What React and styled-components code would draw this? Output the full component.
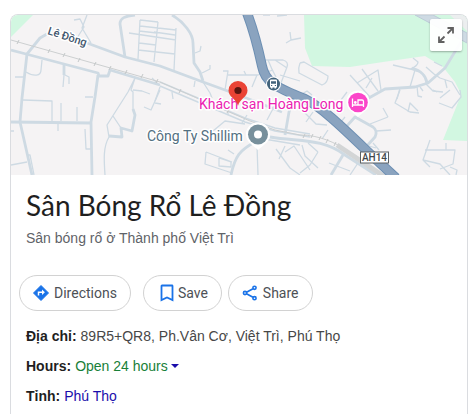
import React, {useState} from 'react'
import styled, {createGlobalStyle} from 'styled-components'

const GlobalStyle = createGlobalStyle`
  * {
    box-sizing: border-box;
  }
  body {
    margin: 0;
    background: white;
    font-family: 'Liberation Sans', Arial, sans-serif;
    font-size: 14px;
    color: #1f1f1f;
  }
`

const Card = styled.main`
  display: flex;
  flex-direction: column;
  min-height: calc(100vh - 14px);
  margin: 14px 8px 0 10px;
  border: 1px solid #dadce0;
  border-bottom: none;
  border-radius: 8px 8px 0 0;
  overflow: hidden;
`

const MapArea = styled.div`
  position: relative;
  display: flex;
  height: 160px;
  background: #f5f3f4;
`

const MapDrawing = styled.svg`
  width: 100%;
  height: 100%;
`

const ExpandButton = styled.button`
  position: absolute;
  top: 4px;
  right: 5px;
  display: flex;
  align-items: center;
  justify-content: center;
  width: 32px;
  height: 32px;
  padding: 0;
  border: none;
  border-radius: 2px;
  background: rgba(255, 255, 255, 0.94);
  box-shadow: 0 1px 2px rgba(0, 0, 0, 0.3);
  cursor: pointer;
`

const Heading = styled.header`
  display: flex;
  flex-direction: column;
  gap: 6px;
  padding: 12px 15px 0;
`

const Title = styled.h1`
  margin: 0;
  font-family: Lato, Roboto, sans-serif;
  font-size: 28px;
  font-weight: 400;
  line-height: 36px;
`

const Subtitle = styled.div`
  line-height: 18px;
  color: #5f6368;
`

const Actions = styled.div`
  display: flex;
  gap: 12px;
  padding: 28px 8px 0;
`

const ActionGroup = styled.div`
  display: flex;
  gap: 6px;
`

const ActionButton = styled.button`
  display: flex;
  align-items: center;
  gap: 3px;
  height: 36px;
  padding: 0 13px 0 11px;
  border: 1px solid #d2d2d2;
  border-radius: 18px;
  background: white;
  color: #4d5156;
  font-family: Roboto, sans-serif;
  font-size: 14px;
  cursor: pointer;
`

const ActionIcon = styled.svg`
  width: 20px;
  height: 20px;
  color: #1a73e8;
`

const Facts = styled.div`
  display: flex;
  flex-direction: column;
  padding: 10px 15px;
`

const Fact = styled.div`
  display: flex;
  align-items: center;
  gap: 4px;
  line-height: 30px;
  color: #474747;
`

const FactName = styled.span`
  font-weight: bold;
  color: #1f1f1f;
`

const HoursButton = styled.button`
  display: flex;
  align-items: center;
  gap: 3px;
  padding: 0;
  border: none;
  background: none;
  color: #188038;
  font: inherit;
  cursor: pointer;
`

const Caret = styled.span`
  border: 4px solid transparent;
  border-top-color: #1a0dab;
  border-bottom: none;
`

const FactLink = styled.a`
  color: #1a0dab;
  text-decoration: none;
`

const MapLabel = styled.text`
  font-family: Roboto, sans-serif;
  font-size: ${props => props.$small ? '11px' : '14px'};
  font-weight: ${props => props.$small ? 500 : 400};
  fill: ${props => props.$color};
  stroke: white;
  stroke-width: 3px;
  stroke-linejoin: round;
  paint-order: stroke;
`

const MAIN_ROADS = [
  'M11 50 26 54 98 73 99 76 108 76 110 70 160 85',
  'M27 54 40 38 47 34',
  'M87 43 125 57 160 66 203 82 236 94 282 112',
  'M27 54 22 98 20 122 32 175',
  'M98 75 95 97 91 122 92 175',
  'M11 122 91 123',
  'M135 15C125 16 120 18 120 24L125 57',
  'M172 15C184 22 193 34 193 43L194 63 200 72 203 81',
  'M64 65 64 75',
  'M133 109 135 115 132 131 121 128 122 137 109 136',
  'M255 142C240 150 235 156 231 175',
  'M296 90 289 112 285 135',
  'M367 99 385 89 415 87 428 83 445 68 456 50 461 42',
  'M412 68C422 71 426 76 427 83',
  'M270 137C300 142 322 138 345 155L376 175',
  'M343 155 331 175',
  'M346 127 355 117 373 127C377 130 377 133 375 137L366 147',
]

const SMALL_ROADS = [
  'M26 72C34 77 41 76 41 70L42 60M15 77 23 77M64 75 63 87M65 75 69 77 69 84',
  'M87 15 82 28 91 43M74 20 80 19 84 27 77 38',
  'M140 20 138 59M158 22 154 62M176 28 174 70M140 20 158 22M140 26 176 30M139 31 157 33M129 33 176 40M139 43 156 45M138 50 175 54M154 32 175 35',
  'M85 97 93 97M23 100 52 101 52 121M61 103 61 121M77 107 77 121M58 123 58 131M85 129 86 149 91 149',
  'M11 131 14 131M11 165 27 162M28 155 30 155 34 175',
  'M135 78 128 92 107 125 109 137C103 147 104 160 105 175M135 78 131 90 133 92 133 110M133 90 142 91 150 94M113 116 121 128M144 107 151 110 160 90M155 103 161 104M152 78 158 84',
  'M195 53 200 51 201 46M202 73 210 69 210 65M194 87 195 81M203 82 210 93 212 98M225 90 228 71 223 71M228 75 258 75 273 70M244 71 246 75M257 75 252 87',
  'M172 92 173 99M160 87 155 101M263 15 270 15M277 16 287 15',
  'M290 32 291 40 286 43M291 40 301 38',
  'M264 60 283 60Q289 62 287 67L281 83M268 60Q272 70 276 77M275 60 287 68M280 75 300 81',
  'M300 63Q298 68 299 73L322 85Q328 83 328 76L304 62 300 63M302 94 307 91 312 95',
  'M228 105 228 115M247 115 242 123M275 105 267 120M245 124 225 121 213 131M207 98 212 97',
  'M206 152 232 162M206 152 205 164 232 173M219 158 219 166 231 167 231 162 219 158M228 150 234 154M257 145 258 175',
  'M276 149 290 168 300 175M279 159 285 146M285 152 294 146 310 170M302 145 305 156 318 168M318 152 310 165 300 173M308 143 318 152M252 137 300 145',
  'M313 112 306 122M303 111 316 124 327 125M328 130 322 139M300 108 305 111',
  'M350 75 370 97M362 69 378 91M357 83 378 70 381 90M366 88 372 78M341 100 347 92M345 117 336 128',
  'M393 65 410 69 422 73M413 58 418 62Q418 66 410 69M410 69 415 70 410 87M400 90 395 103 410 112 419 113M408 112 410 103 418 111',
  'M426 67 434 74 440 78 452 82 460 95M434 62 442 66M417 86 418 96 422 97M425 83 433 91 443 92M445 80 447 88M420 87 423 91M400 88 397 99',
  'M439 103 452 108 461 97 460 90M440 98 450 90M433 90 437 92',
  'M370 124 388 117M376 131 391 130M373 143 379 150M369 146 376 148M383 108 388 117',
  'M430 140 423 160 440 164 450 175M425 150 455 150 453 164 440 169M446 143 446 150M450 167 457 170 456 175M423 160 430 167',
  'M329 163 350 171M358 163 350 175',
]

const HIGHWAY = 'M247 13C255 34 259 52 262 66C265 82 275 87 305 99C320 106 340 125 367 151L396 178'

// positions of the sleepers along the railway: x, y
const RAIL_TICKS = [
  [18, 42], [49, 51], [64, 55], [79, 60], [95, 64], [110, 68], [126, 72], [142, 76], [157, 81],
  [180, 91], [204, 101], [228, 111], [304, 136], [312, 136], [320, 138], [327, 141], [335, 144],
]

function MapPicture() {
  return (
    <MapDrawing viewBox='11 15 456 160' preserveAspectRatio='xMinYMin slice' fill='none'>
      <path d='M11 15H33L11 37Z' fill='#d2f7e1' />
      <path d='M304 15 305 48 312 66 350 67 383 62 425 56 443 67 455 82 467 106V15Z' fill='#d2f7e1' />
      <path d='M463 90 443 140 467 141V90Z' fill='#d2f7e1' />
      <path d='M450 15H467V31Z' fill='#eceeef' />
      <path d='M415 15H433L467 33V43Z' fill='#cedae3' stroke='#bccbd7' />
      <g stroke='#cedae3' strokeLinejoin='round'>
        {SMALL_ROADS.map((d, index) => <path key={index} d={d} strokeWidth='1.3' />)}
        {MAIN_ROADS.map((d, index) => <path key={index} d={d} strokeWidth='2.8' />)}
      </g>
      <path d='M160 82 245 118 275 128 310 134M160 86 245 122 275 131 310 137' stroke='#cedae3' strokeWidth='1.5' />
      <path d='M11 40 160 82 250 121 275 130 300 135C320 135 335 143 347 150L389 178' stroke='#cccfd0' />
      <path d='M337 145 385 177' stroke='#d3d5d6' strokeWidth='5' />
      {RAIL_TICKS.map(([x, y]) => (
        <path key={x} d={`M${x + 1} ${y - 2} ${x - 1} ${y + 2}`} stroke='#c3c7c8' />
      ))}
      <path d={HIGHWAY} stroke='#6d8fb3' strokeWidth='10' />
      <path d={HIGHWAY} stroke='#8aa3bf' strokeWidth='8' />

      <MapLabel $small $color='#3f566d' transform='translate(47 34) rotate(18)'>Lê Đồng</MapLabel>

      <circle cx='273.500' cy='84' r='7.500' fill='white' />
      <circle cx='273.500' cy='84' r='6.500' fill='#43637b' />
      <path d='M270 80.500q0-1 1-1h5q1 0 1 1v7h-1v1h-1.500v-1h-2v1H271v-1h-1z' fill='white' />
      <path d='M271 81.300h5v2.500h-5z' fill='#43637b' />
      <path d='M271 85.500h1.200M274.800 85.500H276' stroke='#43637b' />

      <path d='M358 117C356 115 353 113 351 111A11.500 11.500 0 1 1 365 111C363 113 360 115 358 117Z' fill='white' />
      <circle cx='358' cy='102.500' r='9.800' fill='#fb45c9' />
      <path d='M352.500 98.500v8.500M352.500 105H363.500v2M363.500 105v-3.500q0-1.500-1.500-1.500h-4v4.500' stroke='white' strokeWidth='1.300' />
      <circle cx='355.300' cy='102.500' r='1.400' fill='white' />

      <path d='M258 150C256 148 253 146 251 144A12 12 0 1 1 265 144C263 146 260 148 258 150Z' fill='white' />
      <circle cx='258' cy='134.500' r='10' fill='#78909c' />
      <circle cx='258' cy='134.500' r='4' fill='white' />

      <MapLabel $color='#eb22b2' x='199' y='109'>Khách sạn Hoàng Long</MapLabel>
      <MapLabel $color='#537081' x='147' y='141'>Công Ty Shillim</MapLabel>

      <rect x='360.500' y='152' width='28' height='11' fill='white' stroke='#5b6164' />
      <text x='374.500' y='161' textAnchor='middle' fontFamily='Roboto, sans-serif' fontSize='10' fontWeight='500' fill='#43484b'>AH14</text>

      <path d='M238 106C236.500 99 228.500 97 228.500 90.500A9.500 9.500 0 0 1 247.500 90.500C247.500 97 239.500 99 238 106Z' fill='#ea4335' />
      <circle cx='238' cy='90.500' r='3.600' fill='#591510' />
    </MapDrawing>
  )
}

function App() {
  const [saved, updateSaved] = useState(false)

  return (
    <>
      <GlobalStyle />
      <Card>
        <MapArea>
          <MapPicture />
          <ExpandButton aria-label='Expand map'>
            <svg width='16' height='16' viewBox='0 0 16 16' fill='none' stroke='#616161' strokeWidth='1.800'>
              <path d='M9.500 1H15v5.500M15 1 9.500 6.500M1 9.500V15h5.500M1 15l5.500-5.500' />
            </svg>
          </ExpandButton>
        </MapArea>
        <Heading>
          <Title>Sân Bóng Rổ Lê Đồng</Title>
          <Subtitle>Sân bóng rổ ở Thành phố Việt Trì</Subtitle>
        </Heading>
        <Actions>
          <ActionButton>
            <ActionIcon viewBox='0 0 20 20' fill='none'>
              <path d='M10 2.500 17.500 10 10 17.500 2.500 10Z' fill='currentColor' stroke='currentColor' strokeLinejoin='round' />
              <path d='M7.500 12.500V9.300H11.500' stroke='white' strokeWidth='1.500' />
              <path d='M11 6.600 13.900 9.300 11 12Z' fill='white' />
            </ActionIcon>
            Directions
          </ActionButton>
          <ActionGroup>
            <ActionButton aria-pressed={saved} onClick={() => updateSaved(!saved)}>
              <ActionIcon viewBox='0 0 20 20' fill={saved ? 'currentColor' : 'none'}>
                <path d='M6.500 3q0-.5.5-.5h10q.5 0 .5.500V17L12 14.500 6.500 17Z' stroke='currentColor' strokeWidth='1.800' />
              </ActionIcon>
              Save
            </ActionButton>
            <ActionButton>
              <ActionIcon viewBox='0 0 20 20' fill='none' stroke='currentColor' strokeWidth='1.600'>
                <path d='M6.500 9.200 13 5.700M6.500 10.800 13 14.300' />
                <circle cx='5' cy='10' r='1.600' />
                <circle cx='14.500' cy='4.800' r='1.600' />
                <circle cx='14.500' cy='15.200' r='1.600' />
              </ActionIcon>
              Share
            </ActionButton>
          </ActionGroup>
        </Actions>
        <Facts>
          <Fact>
            <FactName>Địa chỉ:</FactName>
            <span>89R5+QR8, Ph.Vân Cơ, Việt Trì, Phú Thọ</span>
          </Fact>
          <Fact>
            <FactName>Hours:</FactName>
            <HoursButton>
              Open 24 hours
              <Caret />
            </HoursButton>
          </Fact>
          <Fact>
            <FactName>Tỉnh:</FactName>
            <FactLink href='#phu-tho'>Phú Thọ</FactLink>
          </Fact>
        </Facts>
      </Card>
    </>
  )
}

export default App
